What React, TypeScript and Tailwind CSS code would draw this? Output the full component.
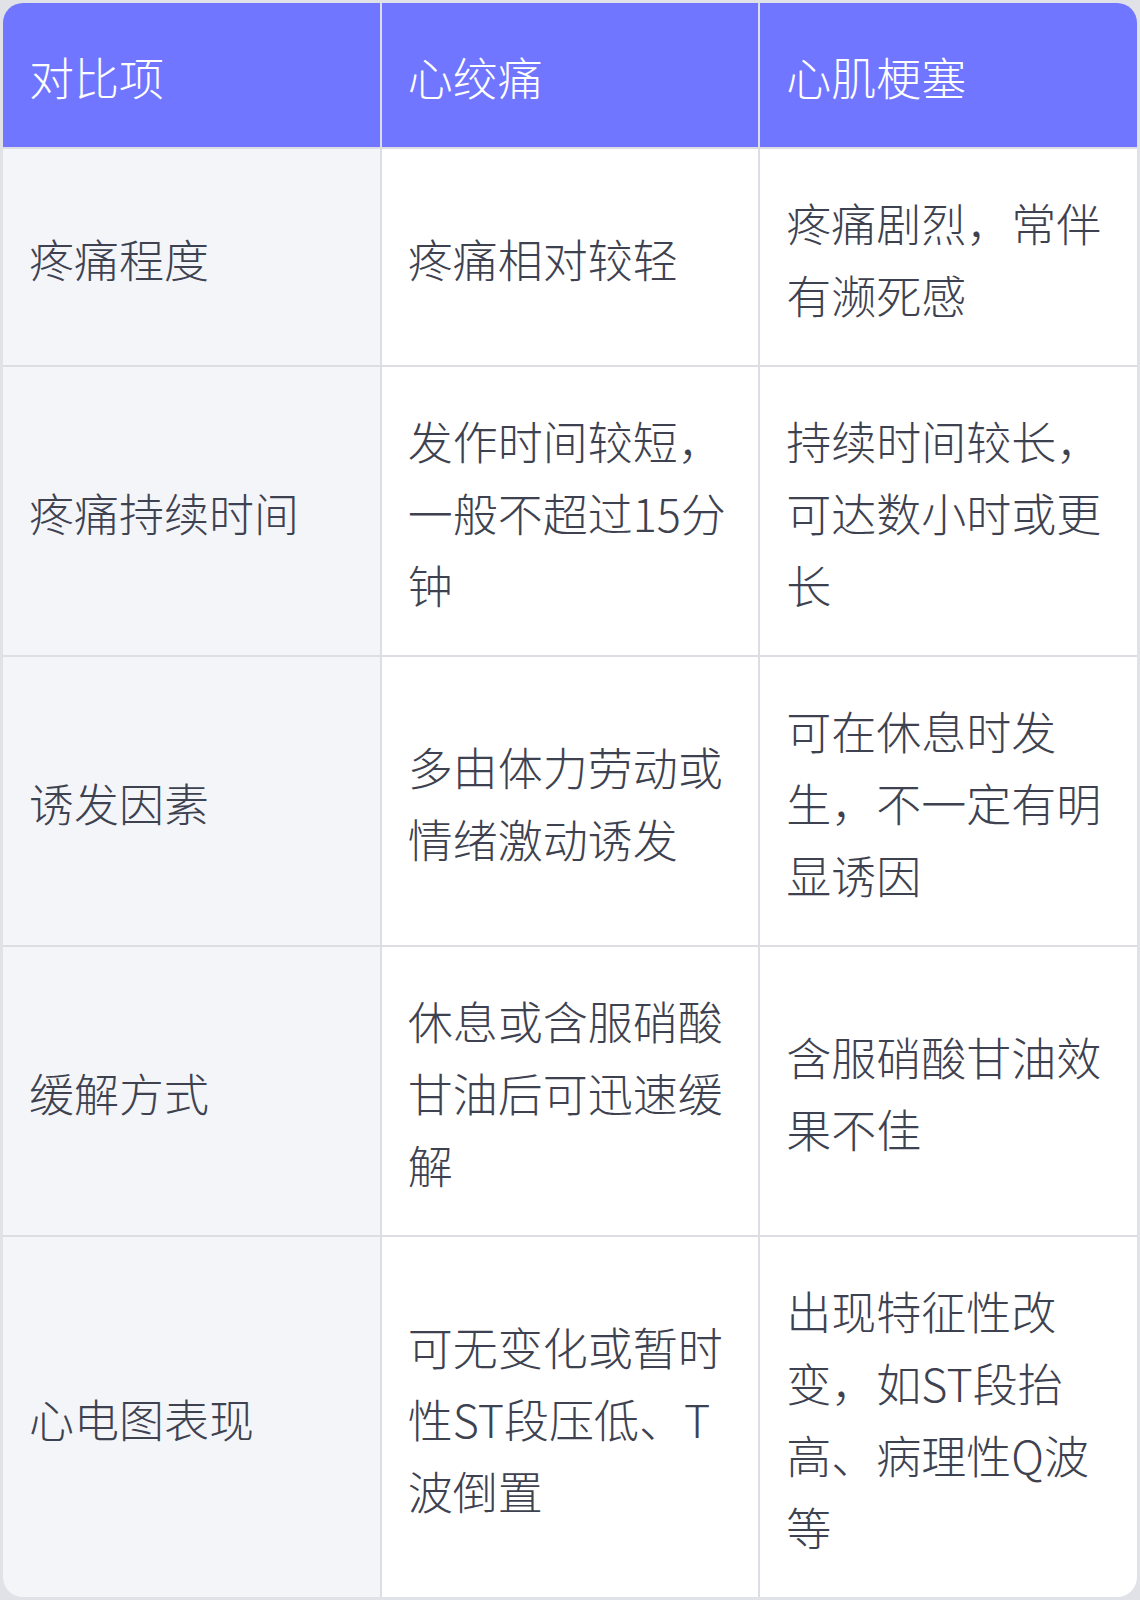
const rows: string[][] = [
  ['疼痛程度', '疼痛相对较轻', '疼痛剧烈，常伴有濒死感'],
  ['疼痛持续时间', '发作时间较短，一般不超过15分钟', '持续时间较长，可达数小时或更长'],
  ['诱发因素', '多由体力劳动或情绪激动诱发', '可在休息时发生，不一定有明显诱因'],
  ['缓解方式', '休息或含服硝酸甘油后可迅速缓解', '含服硝酸甘油效果不佳'],
  ['心电图表现', '可无变化或暂时性ST段压低、T波倒置', '出现特征性改变，如ST段抬高、病理性Q波等'],
];

const headers = ['对比项', '心绞痛', '心肌梗塞'];

export default function App() {
  return (
    <div
      className="w-[1140px] h-[1600px] bg-[#e1e2e7] p-[3px]"
      style={{ fontFamily: '"Noto Sans CJK SC", "Noto Sans", sans-serif' }}
    >
      <div className="grid grid-cols-3 gap-[2px] bg-[#dddee3] rounded-[20px] overflow-hidden text-[45px] leading-[72px] font-light">
        {headers.map((h) => (
          <div key={h} className="bg-[#7076ff] text-white pl-[26px] pr-[30px] pt-[38px] pb-[34px] flex items-center">
            {h}
          </div>
        ))}
        {rows.map((row, i) => (
          row.map((cell, j) => (
            <div
              key={`${i}-${j}`}
              className={
                j === 0
                  ? 'bg-[#f4f5f9] text-[#3e4250] pl-[26px] pr-[30px] pt-[38px] pb-[34px] flex items-center'
                  : 'bg-white text-[#3e4250] pl-[26px] pr-[30px] pt-[38px] pb-[34px] flex items-center'
              }
            >
              {cell}
            </div>
          ))
        ))}
      </div>
    </div>
  );
}
